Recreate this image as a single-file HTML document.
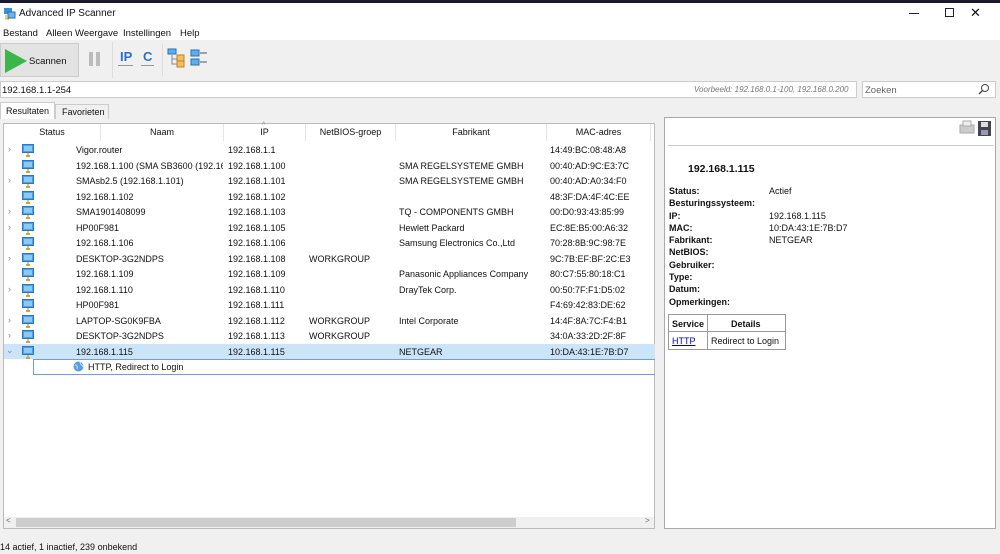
<!DOCTYPE html>
<html><head><meta charset="utf-8"><style>
*{margin:0;padding:0;box-sizing:border-box}
body{width:1000px;height:554px;overflow:hidden;background:#f0f0f0;font-family:"Liberation Sans",sans-serif;font-size:9px;color:#111;position:relative}
.a{position:absolute;white-space:nowrap}
.row{position:absolute;left:4px;width:650px;height:15px;white-space:nowrap}
.row span{position:absolute;top:2px;overflow:hidden}
.mon{position:absolute;left:18px;top:1px;width:12px;height:13px}
.chev{position:absolute;left:6px;top:2px;color:#888;font-size:9px}
.th{position:absolute;top:0;height:17px;border-right:1px solid #e5e5e5;text-align:center;line-height:17px}
.lbl{font-weight:bold}
.m{font-size:9.5px;top:28px}
</style></head><body>
<div class="a" style="left:0;top:0;width:1000px;height:3px;background:#1a1a2a"></div>
<div class="a" style="left:0;top:3px;width:1000px;height:37px;background:#fff"></div>
<svg class="a" style="left:3px;top:7px" width="13" height="13"><rect x="1" y="1" width="8" height="6" fill="#3a8fd8"/><rect x="5" y="5" width="7" height="6" fill="#6bb5ea" stroke="#2a6fb0"/><path d="M3 8v4h3" stroke="#d9a300" fill="none"/></svg>
<div class="a" style="left:19px;top:8px;font-size:10px">Advanced IP Scanner</div>
<div class="a" style="left:909px;top:13px;width:10px;height:1px;background:#222"></div>
<div class="a" style="left:945px;top:8px;width:9px;height:9px;border:1px solid #222"></div>
<div class="a" style="left:970px;top:5px;font-size:13px">&#10005;</div>
<div class="a m" style="left:3px">Bestand</div>
<div class="a m" style="left:46px">Alleen Weergave</div>
<div class="a m" style="left:123px">Instellingen</div>
<div class="a m" style="left:180px">Help</div>
<div class="a" style="left:0;top:43px;width:79px;height:34px;background:#e3e3e3;border:1px solid #ccc"></div>
<svg class="a" style="left:4px;top:48px" width="24" height="26"><path d="M1 1L23 13L1 25Z" fill="#3cb54a"/></svg>
<div class="a" style="left:29px;top:56px;font-size:9.5px">Scannen</div>
<div class="a" style="left:89px;top:52px;width:4px;height:14px;background:#bbb"></div>
<div class="a" style="left:96px;top:52px;width:4px;height:14px;background:#bbb"></div>
<div class="a" style="left:112px;top:42px;width:1px;height:36px;background:#ddd"></div>
<div class="a" style="left:120px;top:49px;font-weight:bold;color:#2a6fd0;font-size:13px">IP</div>
<div class="a" style="left:118px;top:65px;width:15px;height:1px;background:#999"></div>
<div class="a" style="left:143px;top:49px;font-weight:bold;color:#2a6fd0;font-size:13px">C</div>
<div class="a" style="left:141px;top:65px;width:13px;height:1px;background:#999"></div>
<div class="a" style="left:162px;top:44px;width:1px;height:32px;background:#ddd"></div>
<svg class="a" style="left:167px;top:48px" width="42" height="20"><rect x="1" y="1" width="8" height="5" fill="#5ab0ec" stroke="#2a6fb0"/><path d="M5 7v9h5M5 11h5" stroke="#888" fill="none"/><rect x="10" y="7" width="7" height="6" fill="#f0c060" stroke="#c08020"/><rect x="10" y="13" width="7" height="6" fill="#f0c060" stroke="#c08020"/><rect x="24" y="2" width="8" height="6" fill="#5ab0ec" stroke="#2a6fb0"/><rect x="24" y="11" width="8" height="6" fill="#5ab0ec" stroke="#2a6fb0"/><path d="M33 5h7M33 14h7" stroke="#555"/></svg>
<div class="a" style="left:0;top:81px;width:857px;height:17px;background:#fff;border:1px solid #ccc"></div>
<div class="a" style="left:2px;top:85px;font-size:9.5px">192.168.1.1-254</div>
<div class="a" style="left:694px;top:85px;font-size:8px;color:#777;font-style:italic">Voorbeeld: 192.168.0.1-100, 192.168.0.200</div>
<div class="a" style="left:862px;top:81px;width:134px;height:17px;background:#fff;border:1px solid #ccc"></div>
<div class="a" style="left:865px;top:85px;font-size:9.5px;color:#666">Zoeken</div>
<svg class="a" style="left:978px;top:83px" width="12" height="12"><circle cx="7" cy="5" r="3.5" stroke="#444" fill="none"/><path d="M4.5 7.5L1 11" stroke="#444" stroke-width="1.3"/></svg>
<div class="a" style="left:0;top:102px;width:55px;height:17px;background:#fff;border:1px solid #ccc;border-bottom:none"></div>
<div class="a" style="left:6px;top:106px">Resultaten</div>
<div class="a" style="left:55px;top:104px;width:54px;height:15px;background:#f0f0f0;border:1px solid #ccc;border-bottom:none"></div>
<div class="a" style="left:62px;top:107px">Favorieten</div>
<div class="a" style="left:3px;top:123px;width:652px;height:406px;background:#fff;border:1px solid #bbb"></div>
<div class="a" style="left:4px;top:124px;width:650px;height:17px">
<div class="th" style="left:0;width:97px">Status</div>
<div class="th" style="left:97px;width:123px">Naam</div>
<div class="th" style="left:220px;width:82px">IP<div class="a" style="left:38px;top:-7px;font-size:7px;color:#888">^</div></div>
<div class="th" style="left:302px;width:90px">NetBIOS-groep</div>
<div class="th" style="left:392px;width:151px">Fabrikant</div>
<div class="th" style="left:543px;width:104px">MAC-adres</div>
</div>
<div class="a" style="left:4px;top:344px;width:651px;height:15px;background:#cce4f7"></div>
<div class="a" style="left:33px;top:359px;width:622px;height:16px;border:1px solid #6ba0d8;border-right:none"></div>
<svg class="a" style="left:73px;top:361px" width="11" height="11"><circle cx="5.5" cy="5.5" r="5" fill="#5a9de0"/><path d="M2 4c2 0 3 2 2 4M7 1c0 3 3 3 3 5" stroke="#cfe5f8" fill="none"/></svg>
<div class="a" style="left:88px;top:362px">HTTP, Redirect to Login</div>
<div id="rows"></div>
<div class="a" style="left:4px;top:517px;width:650px;height:11px;background:#f0f0f0"></div>
<div class="a" style="left:16px;top:518px;width:500px;height:9px;background:#cdcdcd"></div>
<div class="a" style="left:6px;top:516px;font-size:8px;color:#666">&lt;</div>
<div class="a" style="left:645px;top:516px;font-size:8px;color:#666">&gt;</div>
<div class="a" style="left:0;top:542px;font-size:9px">14 actief, 1 inactief, 239 onbekend</div>
<div class="a" style="left:664px;top:117px;width:332px;height:412px;background:#fff;border:1px solid #aaa"></div>
<div class="a" style="left:668px;top:145px;width:326px;height:1px;background:#ccc"></div>
<svg class="a" style="left:958px;top:120px" width="36" height="18"><rect x="2" y="5" width="14" height="8" fill="#ccc" stroke="#aaa"/><rect x="5" y="1" width="8" height="5" fill="#eee" stroke="#aaa"/><rect x="20" y="1" width="13" height="15" fill="#445" /><rect x="23" y="2" width="7" height="5" fill="#ddd"/><rect x="23" y="10" width="7" height="5" fill="#99a"/></svg>
<div class="a" style="left:688px;top:163px;font-weight:bold;font-size:10.5px">192.168.1.115</div>
<div class="a lbl" style="left:669px;top:185px;line-height:12.3px">Status:<br>Besturingssysteem:<br>IP:<br>MAC:<br>Fabrikant:<br>NetBIOS:<br>Gebruiker:<br>Type:<br>Datum:<br>Opmerkingen:</div>
<div class="a" style="left:769px;top:185px;line-height:12.3px">Actief<br>&nbsp;<br>192.168.1.115<br>10:DA:43:1E:7B:D7<br>NETGEAR</div>
<div class="a" style="left:668px;top:314px;width:118px;height:36px;border:1px solid #999"></div>
<div class="a" style="left:668px;top:331px;width:118px;height:1px;background:#999"></div>
<div class="a" style="left:707px;top:314px;width:1px;height:36px;background:#999"></div>
<div class="a lbl" style="left:672px;top:319px">Service</div>
<div class="a lbl" style="left:731px;top:319px">Details</div>
<div class="a" style="left:672px;top:336px;color:#00c;text-decoration:underline">HTTP</div>
<div class="a" style="left:711px;top:336px">Redirect to Login</div>
<script>
var d=[
[1,"Vigor.router","192.168.1.1","","","14:49:BC:08:48:A8"],
[0,"192.168.1.100 (SMA SB3600 (192.16...","192.168.1.100","","SMA REGELSYSTEME GMBH","00:40:AD:9C:E3:7C"],
[1,"SMAsb2.5 (192.168.1.101)","192.168.1.101","","SMA REGELSYSTEME GMBH","00:40:AD:A0:34:F0"],
[0,"192.168.1.102","192.168.1.102","","","48:3F:DA:4F:4C:EE"],
[1,"SMA1901408099","192.168.1.103","","TQ - COMPONENTS GMBH","00:D0:93:43:85:99"],
[1,"HP00F981","192.168.1.105","","Hewlett Packard","EC:8E:B5:00:A6:32"],
[0,"192.168.1.106","192.168.1.106","","Samsung Electronics Co.,Ltd","70:28:8B:9C:98:7E"],
[1,"DESKTOP-3G2NDPS","192.168.1.108","WORKGROUP","","9C:7B:EF:BF:2C:E3"],
[0,"192.168.1.109","192.168.1.109","","Panasonic Appliances Company","80:C7:55:80:18:C1"],
[1,"192.168.1.110","192.168.1.110","","DrayTek Corp.","00:50:7F:F1:D5:02"],
[0,"HP00F981","192.168.1.111","","","F4:69:42:83:DE:62"],
[1,"LAPTOP-SG0K9FBA","192.168.1.112","WORKGROUP","Intel Corporate","14:4F:8A:7C:F4:B1"],
[1,"DESKTOP-3G2NDPS","192.168.1.113","WORKGROUP","","34:0A:33:2D:2F:8F"],
[2,"192.168.1.115","192.168.1.115","","NETGEAR","10:DA:43:1E:7B:D7"]];
var h="";
d.forEach(function(r,i){var y=143+i*15.5;
h+='<div class="row" style="top:'+y+'px">'+(r[0]==1?'<span class="chev" style="left:4px;top:1px">&#8250;</span>':r[0]==2?'<span class="chev" style="left:2px;top:0">&#8964;</span>':'')+
'<svg class="mon" viewBox="0 0 12 13"><rect x="0.5" y="0.5" width="11" height="8" fill="#4aa3e8" stroke="#2a78c0"/><rect x="2" y="2" width="8" height="5" fill="#8ccaf5"/><path d="M6 9v2" stroke="#888"/><rect x="4" y="11" width="4" height="2" fill="#e0a020"/></svg>'+
'<span style="left:72px;width:147px">'+r[1]+'</span><span style="left:224px">'+r[2]+'</span><span style="left:305px">'+r[3]+'</span><span style="left:395px">'+r[4]+'</span><span style="left:546px">'+r[5]+'</span></div>';});
document.getElementById("rows").innerHTML=h;
</script>
</body></html>
